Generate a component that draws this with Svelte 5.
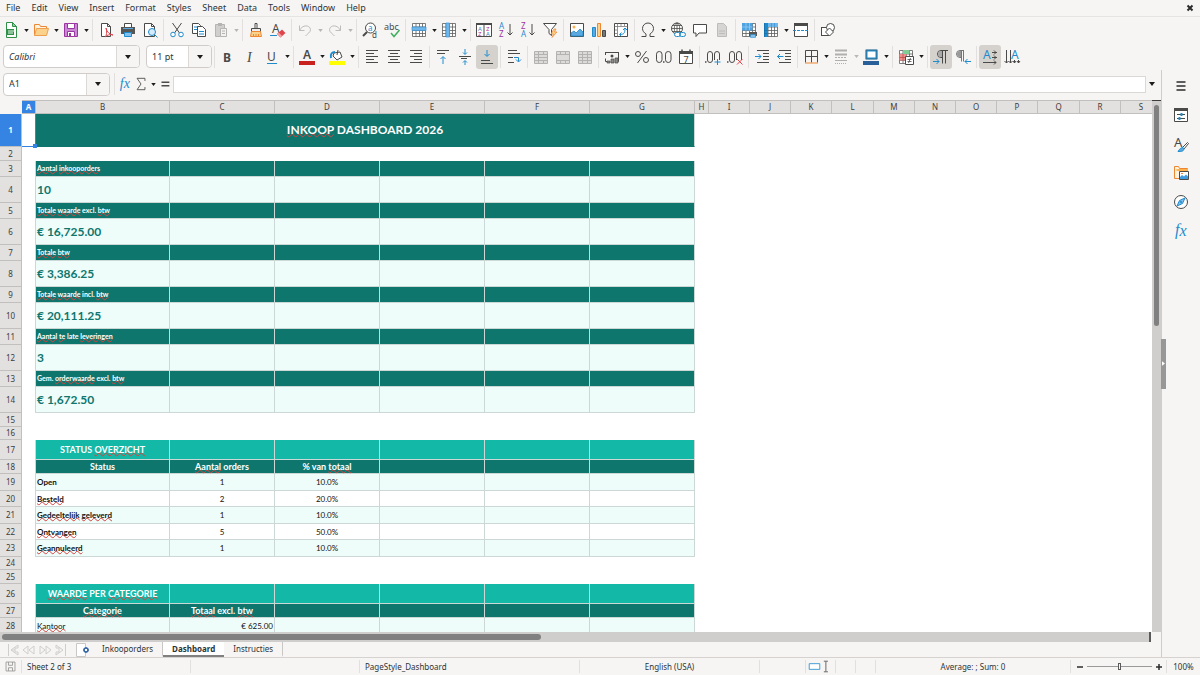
<script>
  const D = '#4a4a48';
  const B = '#1e8bcd';
  const font = 'font-family="Noto Sans, sans-serif"';

  // Icon artwork, all on a 16 x 16 canvas.
  const lines = (list, c = D) =>
    list.map(([x, y, w]) => `<path d="M${x} ${y}h${w}" stroke="${c}"/>`).join('');
  const page = (c = D) => `<path d="M3.500 1.500h6l3 3v10h-9z" fill="#fff" stroke="${c}"/><path d="M9.500 1.500v3h3" fill="none" stroke="${c}"/>`;
  const table = (extra) => `<path d="M1.500 1.500h13v13h-13z" fill="#fff"/><path d="M1.500 1.500h13v13h-13zM1.500 5h13M1.500 8.500h13M1.500 11.500h13M5 1.500v13M8.500 1.500v13M11.500 1.500v13" fill="none" stroke="#5c5c5a" stroke-width=".8"/>${extra}`;
  const mergeGrid = (mid) => `<path d="M1.500 2.500h13v12h-13z" fill="#dcdbda" stroke="#b3b2b0"/><path d="M1.500 5.500h13M1.500 11.500h13M5.500 2.500v3M10.500 2.500v3M5.500 11.500v3M10.500 11.500v3${mid}" fill="none" stroke="#b3b2b0"/>`;
  const letter = (t, x, y, s, c, w = 400) => `<text x="${x}" y="${y}" ${font} font-size="${s}" font-weight="${w}" fill="${c}">${t}</text>`;

  const icons = {
    new: `<path d="M3.500 .500h6l4 4v11h-10z" fill="#fff" stroke="#309048"/><path d="M9.500 .500v4h4z" fill="#8fcfa0" stroke="#309048"/><path d="M4 7h7v6h-7z" fill="#309048"/><path d="M5 9h7M5 11h5" stroke="#e8f5ea"/>`,
    open: `<path d="M1.500 13.500v-11h5l1 2h6v3" fill="#fff3df" stroke="#ed8733"/><path d="M1.500 13.500l2-7h12l-2 7z" fill="#fbd28b" stroke="#ed9f4f"/>`,
    save: `<path d="M1.500 1.500h13v13h-13z" fill="#c888d3" stroke="#9b35a0"/><path d="M4.500 1.500h7v5h-7zM4.500 9.500h7v5h-7z" fill="#fff" stroke="#9b35a0"/><path d="M6 11h2v4h-2z" fill="#9b35a0"/>`,
    pdf: `${page()}<path d="M8 6c1 4 3 6 7 7c-3-1-6 0-8 2c2-2 2-5 1-9z" fill="#fff" stroke="#e0444c"/>`,
    print: `<path d="M4.500 1.500h7v5h-7z" fill="#fff" stroke="${D}"/><path d="M1 5h14v7h-14z" fill="#565655"/><path d="M3 6.500h10" stroke="#5ba9e0"/><path d="M4.500 10.500h7v4h-7z" fill="#83beec" stroke="${B}"/>`,
    preview: `<path d="M2.500 1.500h7l3 3v10h-10z" fill="#fff" stroke="${D}"/><path d="M9.500 1.500v3h3" fill="none" stroke="${D}"/><circle cx="10" cy="10" r="3.500" fill="#d6eafa" stroke="${B}"/><path d="M12.500 12.500l3 3" stroke="${B}"/>`,
    cut: `<path d="M3.500 1l7 10M12.500 1l-7 10" stroke="${D}" fill="none"/><circle cx="4" cy="12.500" r="2.300" fill="#fff" stroke="${B}"/><circle cx="12" cy="12.500" r="2.300" fill="#fff" stroke="${B}"/>`,
    copy: `<path d="M1.500 1.500h6l2 2v8h-8z" fill="#fff" stroke="${D}"/><path d="M3 5h4M3 7.500h4" stroke="${B}"/><path d="M6.500 4.500h5l3 3v7h-8z" fill="#fff" stroke="${D}"/><path d="M8 9.500h5M8 12h5" stroke="${B}"/>`,
    paste: `<path d="M2.500 2.500h9v12h-9z" fill="#d0cfce" stroke="#b5b4b2"/><path d="M5 1h4v3h-4z" fill="#b5b4b2"/><path d="M7.500 6.500h6v8h-6z" fill="#f2f1f0" stroke="#b5b4b2"/><path d="M9 9h3M9 11.500h3" stroke="#b5b4b2"/>`,
    brush: `<path d="M7 1.500h2v5h-2z" fill="#fff" stroke="${D}"/><path d="M3.500 6.500h9v3h-9z" fill="#eee" stroke="${D}"/><path d="M3.500 9.500h9l1 5h-11z" fill="#fbd28b" stroke="#ed8733"/><path d="M5.500 12v2M8 12v2M10.500 12v2" stroke="#ed8733"/>`,
    clear: `${letter('A', 2, 11, 12, D)}<path d="M0 13.500h7" stroke="${B}"/><path d="M7 12l5-4.500 3.500 3.500-5 4.500z" fill="#e0444c"/><path d="M7 12l1.700-1.500 3.500 3.500-1.700 1.500z" fill="#f3a0a2"/>`,
    undo: `<path d="M2.500 3.500v5h5M2.500 8.500c3-6 10-6 11-1c0 3-3 4-5 6.500" fill="none" stroke="#bdbcba"/>`,
    redo: `<path d="M13.500 3.500v5h-5M13.500 8.500c-3-6-10-6-11-1c0 3 3 4 5 6.500" fill="none" stroke="#bdbcba"/>`,
    find: `<circle cx="8.500" cy="6" r="5" fill="#fff" stroke="${D}"/><path d="M5 10l-4 4" stroke="${D}" stroke-width="2"/>${letter('a', 6, 8.5, 8, B)}${letter('d', 10, 15.5, 8, D)}`,
    abc: `${letter('abc', 0, 7.5, 9, D)}<path d="M7 11l3 3.500l5.500-6.500" fill="none" stroke="#3fae5e" stroke-width="1.500"/>`,
    rows: table('<path d="M1 5h14v3.500h-14z" fill="#6fb6ea"/><path d="M1 5h14v3.500h-14z" fill="none" stroke="#3d93d3" stroke-width=".7"/>'),
    cols: table('<path d="M5 1h3.500v14h-3.500z" fill="#6fb6ea"/><path d="M5 1h3.500v14h-3.500z" fill="none" stroke="#3d93d3" stroke-width=".7"/>'),
    sort: `<path d="M.500 1.500h15v13h-15z" fill="#fff" stroke="${D}"/><path d="M0 1h16v2h-16z" fill="${D}"/><path d="M8 2v13" stroke="${D}"/>${letter('A', 2, 8.5, 6, B)}${letter('Z', 2, 14, 6, '#9b35a0')}${letter('Z', 10, 8.5, 6, '#9b35a0')}${letter('A', 10, 14, 6, B)}`,
    az: `${letter('A', 1, 7, 8, B)}${letter('Z', 1, 15, 8, '#9b35a0')}<path d="M12 2v11M9.500 10.500l2.500 2.500l2.500-2.500" fill="none" stroke="${D}"/>`,
    za: `${letter('Z', 1, 7, 8, '#9b35a0')}${letter('A', 1, 15, 8, B)}<path d="M12 2v11M9.500 10.500l2.500 2.500l2.500-2.500" fill="none" stroke="${D}"/>`,
    filter: `<path d="M1.500 1.500h13l-5 6v6l-2.500-2v-4z" fill="#fff" stroke="${D}"/><path d="M12 7l-3 5h2.500l-1.500 3.500l5-5.500h-2.500l1.500-3z" fill="#fbd28b" stroke="#ed8733" stroke-width=".7"/>`,
    image: `<path d="M1.500 1.500h13v13h-13z" fill="#fff" stroke="${D}"/><circle cx="5" cy="5" r="1.500" fill="#fbb04b"/><path d="M2 14v-3l3-2l2 2l4-4l3 3v4z" fill="#5ba9e0" stroke="${B}" stroke-width=".8"/>`,
    chart: `<path d="M1.500 5.500h3v9h-3z" fill="#5ba9e0" stroke="${B}"/><path d="M6.500 1.500h3v13h-3z" fill="#fbd28b" stroke="#ed8733"/><path d="M11.500 8.500h3v6h-3z" fill="#777" stroke="${D}"/>`,
    pivot: `<path d="M1.500 1.500h13v13h-13z" fill="#fff" stroke="${D}"/><path d="M1.500 4.500h13M4.500 1.500v13M8 2v2M11.500 2v2M2 8h2M2 11.500h2" stroke="#777" stroke-width=".8"/><path d="M7 12.500c4 0 5-1.500 5-6M8.500 10.500l-2 2l2 2M10 8l2-2l2 2" fill="none" stroke="${B}"/>`,
    omega: `<path d="M1.500 14.500h4.500v-2.500c-2-1.300-3.500-3-3.500-5.500a5.500 5.500 0 0 1 11 0c0 2.500-1.500 4.200-3.500 5.500v2.500h4.500" fill="none" stroke="${D}"/>`,
    link: `<circle cx="7" cy="6.500" r="5.500" fill="#fff" stroke="${D}"/><path d="M1.500 6.500h11M7 1v11M2.500 3.500h9M2.500 9.500h9" stroke="${D}" stroke-width=".8"/><ellipse cx="7" cy="6.500" rx="2.700" ry="5.500" fill="none" stroke="${D}" stroke-width=".8"/><rect x="4.500" y="10.500" width="6" height="4" rx="2" fill="#fff" stroke="${B}"/><rect x="9.500" y="10.500" width="6" height="4" rx="2" fill="none" stroke="${B}"/>`,
    comment: `<path d="M1.500 2.500h13v8.500h-7.500l-3 3.500v-3.500h-2.500z" fill="#fff" stroke="${D}"/>`,
    note: `<path d="M3.500 1.500h6l3 3v10h-9z" fill="#d6d5d4" stroke="#bdbcba"/><path d="M5 9h6M5 11.500h6" stroke="#bdbcba"/>`,
    printarea: `${table('<path d="M1 1h10.500v7.500h-10.500z" fill="#4fa3e0"/><path d="M5 1v7.500M8.500 1v7.500M1 5h10.500" stroke="#9fd0f3" stroke-width=".7"/>')}<path d="M8 10h8v4h-8z" fill="#565655"/><path d="M9.500 12.500h5v3h-5z" fill="#83beec" stroke="${B}" stroke-width=".5"/>`,
    freeze: table('<path d="M1 1h14v4h-14z" fill="#6fb6ea"/><path d="M1 1h4v14h-4z" fill="#1e8bcd"/><path d="M1.500 1v14M1.500 8.500h3M1.500 11.500h3" stroke="#1668a0" stroke-width=".7"/><path d="M8.500 1v4M11.500 1v4" stroke="#3d93d3" stroke-width=".7"/>'),
    split: `<path d="M1.500 1.500h13v13h-13z" fill="#fff" stroke="${D}"/><path d="M1 1h14v3h-14z" fill="${D}"/><path d="M0 8.500h16" stroke="${B}" stroke-dasharray="3 1"/>`,
    shapes: `<rect x="1.500" y="5.500" width="8" height="8" fill="#fff" stroke="${D}"/><circle cx="10.500" cy="5.500" r="4" fill="#fff" stroke="${D}"/><path d="M9.500 6l4 4l-4 4l-4-4z" fill="#fff" stroke="${D}"/>`,
    bold: letter('B', 3, 13, 12, D, 700),
    italic: `<text x="5" y="13" font-family="Liberation Serif, serif" font-style="italic" font-size="14" fill="${D}">I</text>`,
    underline: `${letter('U', 3, 11.5, 12, D)}<path d="M3 14.500h10" stroke="${B}"/>`,
    fontcolor: `${letter('A', 4, 10, 12, D, 600)}<path d="M0 12h16v4h-16z" fill="#c9211e"/>`,
    fill: `<path d="M5 4l6-1l2 5l-5 3l-4-4z" fill="#fff" stroke="${D}"/><path d="M8 6l1-5" stroke="${D}"/><path d="M2 9c-1-4 1-6 4-6" fill="none" stroke="${B}" stroke-width="2"/><path d="M0 12h16v4h-16z" fill="#ffff00"/>`,
    left: lines([[2, 1.5, 12], [2, 4.5, 8], [2, 7.5, 12], [2, 10.5, 8], [2, 13.5, 12]]),
    center: lines([[2, 1.5, 12], [4, 4.5, 8], [2, 7.5, 12], [4, 10.5, 8], [2, 13.5, 12]]),
    right: lines([[2, 1.5, 12], [6, 4.5, 8], [2, 7.5, 12], [6, 10.5, 8], [2, 13.5, 12]]),
    top: `${lines([[2, 1.5, 12], [2, 4.5, 8]])}<path d="M8 15v-7M5.500 10l2.500-2.500l2.500 2.500" fill="none" stroke="${B}"/>`,
    middle: `${lines([[2, 7.5, 12], [4, 9.5, 6]])}<path d="M8 0v5M6 3.500l2 2l2-2M8 16v-4M6 13.500l2-2l2 2" fill="none" stroke="${B}"/>`,
    bottom: `${lines([[2, 11.5, 9], [2, 14.5, 12]])}<path d="M8 1v6M5.500 5l2.500 2.500l2.500-2.500" fill="none" stroke="${B}"/>`,
    wrap: `${lines([[2, 1.5, 9], [2, 4.5, 12], [2, 8.5, 5], [2, 13.5, 6]])}<path d="M8 8.500h4.500v4M10 10.500l2.500 2.500l2.500-2.500" fill="none" stroke="${B}"/>`,
    merge1: mergeGrid('M1.500 8.500h13M5.500 5.500v6'),
    merge2: mergeGrid(''),
    merge3: mergeGrid('M5.500 5.500v6M10.500 5.500v6M1.500 8.500h13'),
    currency: `<path d="M1.500 4.500v-1h13v9h-3M1.500 9.500v3h4" fill="none" stroke="${D}"/><path d="M1 3h3v1h-2v2h-1zM12 3h3v3h-1v-2h-2z" fill="${D}"/><circle cx="8" cy="7" r="1.500" fill="${D}"/><path d="M3 12h3v2h-3zM7 10h3v4h-3zM11 9h3v5h-3z" fill="#8b8b89" stroke="${D}" stroke-width=".7"/>`,
    percent: `<circle cx="4" cy="5" r="2.500" fill="none" stroke="${D}"/><circle cx="12" cy="11" r="2.500" fill="none" stroke="${D}"/><path d="M12.500 2l-9 12" stroke="${D}"/>`,
    decimal: `<rect x=".5" y="2.500" width="5.500" height="11" rx="2.700" fill="none" stroke="${D}"/><rect x="9.500" y="2.500" width="5.500" height="11" rx="2.700" fill="none" stroke="${D}"/><path d="M7 13h1.500" stroke="${D}" stroke-width="1.500"/>`,
    date: `<path d="M1.500 2.500h13v12h-13z" fill="#fff" stroke="${D}"/><path d="M1 2h14v3h-14z" fill="${D}"/><path d="M4 .500v3M12 .500v3" stroke="${D}" stroke-width="1.500"/>${letter('7', 5.5, 13.5, 9, D)}`,
    adddec: `<rect x="2.500" y="2.500" width="5" height="11" rx="2.500" fill="none" stroke="${D}"/><rect x="9.500" y="2.500" width="5" height="11" rx="2.500" fill="none" stroke="${D}"/><path d="M0 13h1.500" stroke="${D}" stroke-width="1.500"/><path d="M9 13h7" stroke="#f6f5f4" stroke-width="4"/><path d="M9.500 13h6M12.500 10v6" stroke="${B}"/>`,
    deldec: `<rect x="2.500" y="2.500" width="5" height="11" rx="2.500" fill="none" stroke="${D}"/><rect x="9.500" y="2.500" width="5" height="11" rx="2.500" fill="none" stroke="${D}"/><path d="M0 13h1.500" stroke="${D}" stroke-width="1.500"/><path d="M9 13h7" stroke="#f6f5f4" stroke-width="4"/><path d="M10 10l5.500 5.500M15.500 10l-5.500 5.500" stroke="#e0444c"/>`,
    indent: `${lines([[3, 1.5, 12], [9, 4.5, 6], [9, 7.5, 6], [9, 10.5, 6], [3, 13.5, 12]])}<path d="M1 7.500h6M4.500 5l2.500 2.500l-2.500 2.500" fill="none" stroke="${B}"/>`,
    outdent: `${lines([[3, 1.5, 12], [9, 4.5, 6], [9, 7.5, 6], [9, 10.5, 6], [3, 13.5, 12]])}<path d="M1.500 7.500h6M4 5l-2.500 2.500l2.500 2.500" fill="none" stroke="${B}"/>`,
    borders: `<path d="M2.500 1.500v12M2.500 1.500h12v12M8.500 1.500v12M2.500 7.500h12" fill="none" stroke="${D}"/><path d="M2 14h13" stroke="#ed8733"/>`,
    linestyle: `<path d="M2 1.500h12M2 5.500h12" stroke="#b0afad" stroke-width="2"/><path d="M2 8.500h12" stroke="#b0afad" stroke-dasharray="2 1"/><path d="M2 11.500h12" stroke="#b0afad"/><path d="M2 14.500h12" stroke="#b0afad" stroke-dasharray="1 1"/>`,
    linecolor: `<path d="M3.500 1.500h10v8h-10z" fill="#fff" stroke="${B}" stroke-width="2"/><path d="M3 1h11v9h-11z" fill="none" stroke="#555" stroke-width=".5"/><path d="M0 12h16v4h-16z" fill="#2a6099"/>`,
    cond: `${table('<path d="M5 1h6.500v4h-6.500z" fill="#7fcf95"/><path d="M1.500 5h7v6.500h-7z" fill="#f08d8b"/><path d="M5 5v6.500M1.500 8.500h7" stroke="#b04a48" stroke-width=".7"/>')}<path d="M7.500 7.500h8v8h-8z" fill="#fff" stroke="${D}"/><path d="M9.500 10.500h4M9.500 12.500h4M12.500 9l-2 5" stroke="${D}" stroke-width=".8"/>`,
    ltr: `<path d="M15 1.500h-7a3.500 3.500 0 0 0 0 7h1M9.500 1.500v13M12.500 1.500v13" fill="none" stroke="${D}"/><path d="M9 2h-1a3 3 0 0 0 0 6h1z" fill="#aaa"/><path d="M0 12.500h6M3.500 10l2.500 2.500l-2.500 2.500" fill="none" stroke="${B}"/>`,
    rtl: `<path d="M9 1.500h-4a3.500 3.500 0 0 0 0 7h1M6.500 1.500v11M8.500 1.500v11" fill="none" stroke="#777"/><path d="M6 2h-1a3 3 0 0 0 0 6h1z" fill="#999"/><path d="M10 12.500h6M12.500 10l-2.500 2.500l2.500 2.500" fill="none" stroke="${B}"/>`,
    horiz: `${letter('A', 1, 10, 12, B)}<path d="M10 3.500h5M10 8.500h5M1 13.500h13M12 1.500l2 2l-2 2M12 6.500l2 2l-2 2M12 11.500l2 2l-2 2" fill="none" stroke="${D}"/>`,
    vert: `${letter('A', 7, 9.5, 12, B)}<path d="M2.500 1v13M6.500 1v13M10.500 11v3M14.500 11v3M.500 12l2 2l2-2M4.500 12l2 2l2-2M9 12l1.500 2l1.500-2M13 12l1.500 2l1.500-2" fill="none" stroke="${D}"/>`,
    menu: `<path d="M3.500 4h9M3.500 8h9M3.500 12h9" stroke="#2b2b2b" stroke-width="1.300"/>`,
    properties: `<path d="M1.500 1.500h13v13h-13z" fill="#fff" stroke="${D}"/><path d="M1 1h14v3h-14z" fill="${D}"/><path d="M4 7.500h8M4 11.500h8" stroke="${D}"/><path d="M8.500 6v3M6.500 10v3" stroke="${B}" stroke-width="2"/>`,
    styles: `${letter('A', 1, 11, 13, D)}<path d="M14.500 6.500l-5 5l1.500 1.500l4.500-5.500z" fill="#fff" stroke="${D}"/><path d="M10 11.500c-2 0-3 1-5 4c3 0 6 0 6-3z" fill="#5ba9e0" stroke="${B}"/>`,
    gallery: `<path d="M1.500 13.500v-12h4l1 2h8v10z" fill="#fff3df" stroke="#ed8733"/><path d="M2 5l3-1h10v2h-10z" fill="#fbb04b"/><path d="M6.500 6.500h9v8h-9z" fill="#fff" stroke="${D}"/><path d="M7 14v-2l2-2l2 1.500l2-2l2 2v2.500z" fill="#3d9be0"/><path d="M8 8h2v1h-2z" fill="#ed8733"/>`,
    navigator: `<circle cx="8" cy="8" r="6.500" fill="#fff" stroke="${D}"/><path d="M12 4l-2.500 5.500l-5.500 2.500l2.500-5.500z" fill="#83beec" stroke="${B}"/><circle cx="8" cy="8" r="1" fill="${B}"/>`,
    fx: `<text x="2" y="12" font-family="Liberation Serif, serif" font-style="italic" font-size="16" fill="${B}">f<tspan dy="1">x</tspan></text>`,
    sigma: `<path d="M12.500 4.500v-3h-9l4.500 6.500l-4.500 6.500h9v-3" fill="none" stroke="${D}"/>`,
    equals: `<path d="M4 6h9M4 10h9" stroke="${D}" stroke-width="1.600"/>`,
    first: `<path d="M3.500 2v12M6 8h4M13 3l-7 5l7 5v-3h-3v-4h3z" fill="none" stroke="#cfcecc"/>`,
    prev: `<path d="M7 4l-5 4l5 4zM13 4l-5 4l5 4z" fill="none" stroke="#cfcecc"/>`,
    next: `<path d="M3 4l5 4l-5 4zM9 4l5 4l-5 4z" fill="none" stroke="#cfcecc"/>`,
    last: `<path d="M12.500 2v12M3 3l7 5l-7 5v-3h3v-4h-3z" fill="none" stroke="#cfcecc"/>`,
    addsheet: `<path d="M2.500 1.500h9v13h-9z" fill="#fff" stroke="#c9c8c6"/><circle cx="12" cy="8" r="2" fill="#fff" stroke="#3465a4" stroke-width="1.500"/><path d="M12 5v2M12 9v2M9 8h2M13 8h2" stroke="#3465a4"/>`,
    saved: `<path d="M2.500 2.500h11v11h-11z" fill="#f6f5f4" stroke="#929190"/><path d="M5.500 2.500v4h5v-4M5.500 13.500v-4h5v4" fill="none" stroke="#929190"/>`,
    selection: `<path d="M1.500 4.500h13v7h-13z" fill="#fff" stroke="${B}"/>`,
    cursor: `<path d="M6 2v12M3.500 1.500h5M3.500 14.500h5" fill="none" stroke="${D}"/>`
  };

  // Toolbar items: [icon, label, dropdown?, state?]; '|' starts a new group.
  const standard = [
    ['new', 'New', 1], ['open', 'Open', 1], ['save', 'Save', 1], '|',
    ['pdf', 'Export as PDF'], ['print', 'Print'], ['preview', 'Print preview'], '|',
    ['cut', 'Cut'], ['copy', 'Copy'], ['paste', 'Paste', 1, 'off'], '|',
    ['brush', 'Clone formatting'], ['clear', 'Clear formatting'], '|',
    ['undo', 'Undo', 1, 'off'], ['redo', 'Redo', 1, 'off'], '|',
    ['find', 'Find and replace'], ['abc', 'Spelling'], '|',
    ['rows', 'Row', 1], ['cols', 'Column', 1], '|',
    ['sort', 'Sort'], ['az', 'Sort ascending'], ['za', 'Sort descending'], ['filter', 'AutoFilter'], '|',
    ['image', 'Insert image'], ['chart', 'Insert chart'], ['pivot', 'Pivot table'], '|',
    ['omega', 'Special character', 1], ['link', 'Hyperlink'], ['comment', 'Comment'], ['note', 'Headers and footers', 0, 'off'], '|',
    ['printarea', 'Print area'], ['freeze', 'Freeze', 1], ['split', 'Split window'], '|',
    ['shapes', 'Draw functions']
  ];
  const formatting = [
    ['bold', 'Bold'], ['italic', 'Italic'], ['underline', 'Underline', 1], '|',
    ['fontcolor', 'Font color', 1], ['fill', 'Background color', 1], '|',
    ['left', 'Align left'], ['center', 'Align center'], ['right', 'Align right'], '|',
    ['top', 'Align top'], ['middle', 'Center vertically'], ['bottom', 'Align bottom', 0, 'on'], '|',
    ['wrap', 'Wrap text'], '|',
    ['merge1', 'Merge and center', 0, 'off'], ['merge2', 'Merge cells', 0, 'off'], ['merge3', 'Unmerge cells', 0, 'off'], '|',
    ['currency', 'Currency', 1], ['percent', 'Percent'], ['decimal', 'Number'], ['date', 'Date'], '|',
    ['adddec', 'Add decimal place'], ['deldec', 'Delete decimal place'], '|',
    ['indent', 'Increase indent'], ['outdent', 'Decrease indent'], '|',
    ['borders', 'Borders', 1], ['linestyle', 'Border style', 1, 'off'], ['linecolor', 'Border color', 1], '|',
    ['cond', 'Conditional formatting', 1], '|',
    ['ltr', 'Left to right', 0, 'on'], ['rtl', 'Right to left'], '|',
    ['horiz', 'Text direction horizontal', 0, 'on'], ['vert', 'Text direction vertical']
  ];
  const menus = ['File', 'Edit', 'View', 'Insert', 'Format', 'Styles', 'Sheet', 'Data', 'Tools', 'Window', 'Help'];
  const sidebar = [['menu', 'Sidebar settings'], ['properties', 'Properties'], ['styles', 'Styles'], ['gallery', 'Gallery'], ['navigator', 'Navigator'], ['fx', 'Functions']];

  const columns = [
    ['A', 14], ['B', 134], ['C', 105], ['D', 105], ['E', 105], ['F', 105], ['G', 105], ['H', 14],
    ['I', 41], ['J', 41], ['K', 41], ['L', 42], ['M', 41], ['N', 41], ['O', 41], ['P', 41], ['Q', 42], ['R', 41], ['S', 41]
  ];
  const sheetWidth = columns.reduce((sum, c) => sum + c[1], 22);

  // Rows: [height, kind, cells from column B]. Words between tildes are flagged by the spell checker.
  const rows = [
    [33, 'title', ['~INKOOP~ DASHBOARD 2026']],
    [14, ''],
    [16, 'label', ['~Aantal~ ~inkooporders~']], [26, 'value', ['10']],
    [16, 'label', ['~Totale~ ~waarde~ excl. ~btw~']], [26, 'value', ['€ 16,725.00']],
    [16, 'label', ['~Totale~ ~btw~']], [26, 'value', ['€ 3,386.25']],
    [16, 'label', ['~Totale~ ~waarde~ incl. ~btw~']], [26, 'value', ['€ 20,111.25']],
    [16, 'label', ['~Aantal~ ~te~ late ~leveringen~']], [26, 'value', ['3']],
    [16, 'label', ['Gem. ~orderwaarde~ excl. ~btw~']], [26, 'value', ['€ 1,672.50']],
    [14, ''], [13, ''],
    [20, 'section', ['STATUS ~OVERZICHT~']],
    [14, 'head', ['Status', '~Aantal~ orders', '% van ~totaal~']],
    [17, 'data tint', ['Open', '1', '10.0%']],
    [16, 'data', ['~Besteld~', '2', '20.0%']],
    [17, 'data tint', ['~Gedeeltelijk~ ~geleverd~', '1', '10.0%']],
    [16, 'data', ['~Ontvangen~', '5', '50.0%']],
    [17, 'data tint', ['~Geannuleerd~', '1', '10.0%']],
    [13, ''], [14, ''],
    [20, 'section', ['~WAARDE~ PER ~CATEGORIE~']],
    [14, 'head', ['~Categorie~', '~Totaal~ excl. ~btw~']],
    [16, 'money tint', ['~Kantoor~', '€ 625.00']]
  ];
  const parts = (text) => (text ?? '').split('~');
</script>

{#snippet icon(name)}
  <svg class="icon" viewBox="0 0 16 16" aria-hidden="true">{@html icons[name]}</svg>
{/snippet}

{#snippet arrow()}
  <svg class="arrow" viewBox="0 0 6 4" aria-hidden="true"><path d="M0 0h6l-3 4z" fill="currentColor" /></svg>
{/snippet}

{#snippet tools(items)}
  {#each items as item}
    {#if item === '|'}
      <span class="sep"></span>
    {:else}
      <button class="tool {item[3] ?? ''}" aria-label={item[1]}>{@render icon(item[0])}</button>
      {#if item[2]}
        <button class="drop {item[3] ?? ''}" aria-label="{item[1]} options">{@render arrow()}</button>
      {/if}
    {/if}
  {/each}
{/snippet}

{#snippet words(text)}
  {#each parts(text) as part, i}{#if i % 2}<span class="flag">{part}</span>{:else}{part}{/if}{/each}
{/snippet}

<div class="app">
  <nav class="menubar">
    {#each menus as m}<button>{m}</button>{/each}
    <button class="close" aria-label="Close document">
      <svg viewBox="0 0 8 8" aria-hidden="true"><path d="M1.500 1.500l5 5M6.500 1.500l-5 5" stroke="#2b2b2b" stroke-width="2" /></svg>
    </button>
  </nav>

  <div class="toolbar">{@render tools(standard)}</div>

  <div class="toolbar">
    <div class="combo fontname">
      <input aria-label="Font name" value="Calibri" />
      <button aria-label="Font list">{@render arrow()}</button>
    </div>
    <div class="combo fontsize">
      <input aria-label="Font size" value="11 pt" />
      <button aria-label="Size list">{@render arrow()}</button>
    </div>
    <span class="sep"></span>
    {@render tools(formatting)}
  </div>

  <div class="body">
    <main>
      <div class="formula">
        <div class="combo namebox">
          <input aria-label="Name box" value="A1" />
          <button aria-label="Named ranges">{@render arrow()}</button>
        </div>
        <span class="sep"></span>
        <button class="tool small" aria-label="Function wizard">{@render icon('fx')}</button>
        <button class="tool small" aria-label="Select function">{@render icon('sigma')}</button>
        <button class="drop" aria-label="Function options">{@render arrow()}</button>
        <button class="tool small" aria-label="Formula">{@render icon('equals')}</button>
        <input class="line" aria-label="Input line" />
        <button class="expand" aria-label="Expand formula bar">{@render arrow()}</button>
      </div>

      <div class="work">
        <div class="sheet">
          <table style="width: {sheetWidth}px">
            <colgroup>
              <col style="width: 22px" />
              {#each columns as c}<col style="width: {c[1]}px" />{/each}
            </colgroup>
            <thead>
              <tr>
                <td class="corner"></td>
                {#each columns as c, i}<th class:current={i === 0}>{c[0]}</th>{/each}
              </tr>
            </thead>
            <tbody>
              {#each rows as [height, kind, cells], r}
                <tr class={kind} style="height: {height}px">
                  <th class:current={r === 0}>{r + 1}</th>
                  <td class="a" class:edge={kind} class:cursor={r === 0}></td>
                  {#if kind === 'title'}
                    <td class="cell" colspan="6">{@render words(cells[0])}</td>
                  {:else if kind}
                    {#each [0, 1, 2, 3, 4, 5] as c}
                      <td class="cell">{@render words(cells[c])}</td>
                    {/each}
                  {/if}
                </tr>
              {/each}
            </tbody>
          </table>
        </div>
        <div class="vscroll"><span></span></div>
      </div>
      <div class="hscroll"><span></span></div>

      <div class="tabs">
        <div class="nav">
          {#each ['first', 'prev', 'next', 'last'] as n}
            <button aria-label="{n} sheet">{@render icon(n)}</button>
          {/each}
        </div>
        <button class="add" aria-label="Add sheet">{@render icon('addsheet')}</button>
        <button class="tab">Inkooporders</button>
        <button class="tab active">Dashboard</button>
        <button class="tab">Instructies</button>
      </div>
    </main>

    <aside>
      {#each sidebar as s}<button aria-label={s[1]}>{@render icon(s[0])}</button>{/each}
      <button class="handle" aria-label="Hide sidebar">
        <svg viewBox="0 0 4 6" aria-hidden="true"><path d="M0 0l4 3l-4 3z" fill="#fff" /></svg>
      </button>
    </aside>
  </div>

  <footer>
    <span class="mid">{@render icon('saved')}</span>
    <span>Sheet 2 of 3</span>
    <span></span>
    <span>PageStyle_Dashboard</span>
    <span class="mid">English (USA)</span>
    <span></span>
    <span class="mid">{@render icon('selection')}{@render icon('cursor')}</span>
    <span></span>
    <span></span>
    <span class="mid">Average: ; Sum: 0</span>
    <span class="zoom">
      <button aria-label="Zoom out"><svg viewBox="0 0 8 8"><path d="M1 4h6" stroke="#2b2b2b" stroke-width="1.500" /></svg></button>
      <input type="range" aria-label="Zoom" min="0" max="100" value="50" />
      <button aria-label="Zoom in"><svg viewBox="0 0 8 8"><path d="M1 4h6M4 1v6" stroke="#2b2b2b" stroke-width="1.500" /></svg></button>
    </span>
    <span class="mid">100%</span>
  </footer>
</div>

<style>
  :global(body) {
    margin: 0;
    background: #f6f5f4;
  }
  .app {
    display: flex;
    flex-direction: column;
    height: 100vh;
    overflow: hidden;
    background: #f6f5f4;
    color: #2e3436;
    font: 8px/12px "Noto Sans", sans-serif;
  }
  button,
  input {
    margin: 0;
    padding: 0;
    border: 0;
    background: none;
    color: inherit;
    font: inherit;
    min-width: 0;
  }
  button {
    display: flex;
    align-items: center;
    justify-content: center;
    flex: none;
  }
  .icon {
    display: block;
    width: 16px;
    height: 16px;
    overflow: visible;
    flex: none;
  }
  .arrow {
    display: block;
    width: 5px;
    height: 3px;
    color: #1c1c1c;
  }

  .menubar {
    display: flex;
    align-items: center;
    gap: 11px;
    height: 16px;
    padding: 0 6px;
    font-size: 9px;
    flex: none;
  }
  .close {
    margin-left: auto;
  }
  .close svg {
    width: 8px;
    height: 8px;
  }

  .toolbar {
    display: flex;
    align-items: center;
    height: 27px;
    flex: none;
  }
  .menubar + .toolbar {
    height: 26px;
    border-top: 1px solid #e6e4e2;
  }
  .tool {
    width: 22px;
    height: 24px;
    border-radius: 3px;
  }
  .tool.on {
    background: #d5d1cd;
  }
  .drop {
    width: 8px;
    height: 24px;
  }
  .drop.off .arrow {
    color: #b7b6b4;
  }
  .sep {
    width: 1px;
    height: 22px;
    margin: 0 2px;
    background: #e2e0de;
    flex: none;
  }

  .combo {
    display: flex;
    height: 23px;
    box-sizing: border-box;
    border: 1px solid #d0ccc9;
    border-radius: 4px;
    background: #fff;
    overflow: hidden;
    font-size: 9px;
    flex: none;
  }
  .combo input {
    flex: 1;
    padding: 0 5px;
  }
  .combo button {
    width: 23px;
    border-left: 1px solid #dbd8d5;
    background: #f6f5f4;
  }
  .combo .arrow,
  .expand .arrow {
    width: 8px;
    height: 4px;
  }
  .fontname {
    width: 137px;
    margin: 0 6px 0 3px;
  }
  .fontname input {
    font-style: italic;
  }
  .fontsize {
    width: 66px;
  }
  .namebox {
    width: 107px;
    margin-right: 2px;
  }

  .body {
    display: flex;
    flex: 1;
    min-height: 0;
  }
  main {
    display: flex;
    flex-direction: column;
    flex: 1;
    min-width: 0;
  }
  .formula {
    display: flex;
    align-items: center;
    height: 28px;
    padding: 0 0 2px 3px;
    flex: none;
  }
  .tool.small {
    width: 16px;
  }
  .tool.small .icon {
    width: 14px;
    height: 14px;
  }
  .line {
    flex: 1;
    height: 17px;
    box-sizing: border-box;
    border: 1px solid #dbd8d5;
    background: #fff;
  }
  .expand {
    width: 15px;
    height: 17px;
    padding-right: 4px;
  }

  .work {
    display: flex;
    flex: 1;
    min-height: 0;
  }
  .sheet {
    flex: 1;
    min-width: 0;
    overflow: hidden;
    background: #fff;
  }
  table {
    table-layout: fixed;
    border-collapse: separate;
    border-spacing: 0;
  }
  th,
  td {
    padding: 0;
    white-space: nowrap;
    line-height: 1;
  }
  thead tr {
    height: 14px;
  }
  th {
    box-sizing: border-box;
    background: #e2e1df;
    border-right: 1px solid #c2c0be;
    border-bottom: 1px solid #c2c0be;
    color: #3d3d3d;
    font-weight: 400;
    text-align: center;
  }
  thead th {
    border-top: 1px solid #c2c0be;
  }
  th.current {
    background: #3584e4;
    color: #fff;
    font-weight: 700;
  }
  .corner {
    background: #f6f5f4;
  }
  .cell {
    border-right: 1px solid #ccd8d6;
    border-bottom: 1px solid #ccd8d6;
    box-sizing: border-box;
    padding: 0 1px;
    font-family: Lato, sans-serif;
  }
  .a.edge {
    border-right: 1px solid #ccd8d6;
  }
  .a.cursor {
    position: relative;
    border-right: 1px solid #3584e4;
    border-bottom: 1px solid #3584e4;
  }
  .a.cursor::after {
    content: "";
    position: absolute;
    right: -2px;
    bottom: -2px;
    width: 4px;
    height: 4px;
    background: #3584e4;
  }
  .flag {
    text-decoration: underline wavy #d8403c 1px;
    text-decoration-skip-ink: none;
    text-underline-offset: -1px;
  }
  .title .cell {
    background: #0f766e;
    border-bottom-color: #0f766e;
    color: #fff;
    font-size: 12px;
    font-weight: 700;
    text-align: center;
  }
  .label .cell {
    background: #0f766e;
    color: #fff;
    font-size: 7px;
    font-weight: 700;
  }
  .value .cell {
    background: #eefdfa;
    color: #0f766e;
    font-size: 12px;
    font-weight: 700;
  }
  .section .cell {
    background: #14b8a6;
    color: #fff;
    font-size: 9px;
    font-weight: 700;
    text-align: center;
  }
  .head .cell {
    background: #0f766e;
    color: #fff;
    font-size: 9px;
    font-weight: 700;
    text-align: center;
  }
  .data .cell,
  .money .cell {
    color: #111;
    font-size: 8px;
    text-align: center;
  }
  .data .cell:nth-child(3) {
    font-weight: 700;
    text-align: left;
  }
  .money .cell {
    text-align: right;
  }
  .money .cell:nth-child(3) {
    text-align: left;
  }
  .tint .cell {
    background: #eefdfa;
  }

  .vscroll {
    display: flex;
    flex-direction: column;
    align-items: center;
    width: 9px;
    box-sizing: border-box;
    padding-top: 4px;
    border-top: 1px solid #3d3d3d;
    background: #cfcecd;
    flex: none;
  }
  .vscroll span {
    width: 5px;
    height: 42%;
    border-radius: 3px;
    background: #808080;
  }
  .hscroll {
    display: flex;
    align-items: center;
    height: 10px;
    margin-right: 10px;
    padding-left: 2px;
    box-sizing: border-box;
    border-right: 2px solid #5a5a5a;
    background: #cfcecd;
    flex: none;
  }
  .hscroll span {
    width: 47%;
    height: 6px;
    border-radius: 3px;
    background: #808080;
  }

  .tabs {
    display: flex;
    height: 15px;
    padding-left: 5px;
    flex: none;
  }
  .nav {
    display: flex;
    margin-right: 5px;
  }
  .nav button {
    width: 16px;
  }
  .add {
    width: 16px;
    margin-right: 3px;
  }
  .tab {
    padding: 0 9px;
    box-sizing: border-box;
    border-right: 1px solid #c9c7c5;
    border-bottom: 2px solid transparent;
  }
  .tab.active {
    border-right: 0;
    border-bottom-color: #808080;
    background: #fff;
    font-weight: 700;
  }

  aside {
    position: relative;
    display: flex;
    flex-direction: column;
    align-items: center;
    width: 39px;
    box-sizing: border-box;
    border-left: 1px solid #cfcdcb;
    padding-top: 1px;
    flex: none;
  }
  aside button {
    width: 28px;
    height: 29px;
  }
  aside .handle {
    position: absolute;
    left: -1px;
    top: calc(50% - 25px);
    width: 5px;
    height: 50px;
    background: #979797;
  }
  .handle svg {
    width: 3px;
    height: 5px;
  }

  footer {
    display: grid;
    grid-template-columns: 22px 169fr 169fr 220fr 180fr 46fr 30px 20px 20px 195fr 96px 33px;
    align-items: center;
    height: 17px;
    border-top: 1px solid #d5d2cf;
    flex: none;
  }
  footer > span {
    display: flex;
    align-items: center;
    height: 13px;
    padding-left: 5px;
    border-right: 1px solid #e2e0de;
    white-space: nowrap;
  }
  footer > span:last-child {
    border-right: 0;
  }
  footer > .mid {
    justify-content: center;
    padding: 0;
  }
  footer .icon {
    width: 13px;
    height: 13px;
  }
  .zoom button,
  .zoom svg {
    width: 8px;
    height: 8px;
  }
  .zoom input {
    appearance: none;
    width: 65px;
    height: 9px;
    margin: 0 3px;
    background: linear-gradient(#9a9a9a, #9a9a9a) center / 100% 1px no-repeat;
  }
  .zoom input::-webkit-slider-thumb {
    appearance: none;
    width: 3px;
    height: 7px;
    box-sizing: border-box;
    border: 1px solid #5a5a5a;
    background: #f6f5f4;
  }
</style>
